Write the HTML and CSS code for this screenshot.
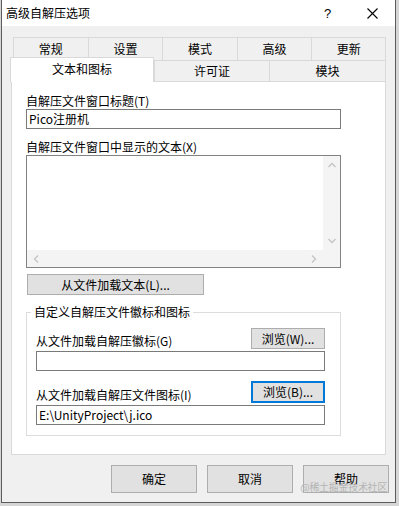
FILE: index.html
```html
<!DOCTYPE html>
<html lang="zh-CN">
<head>
    <meta charset="UTF-8">
    <title>高级自解压选项</title>
    <link rel="stylesheet" href="styles.css">
</head>
<body>
    <div class="window">
        <div class="titlebar">
            <div class="title">高级自解压选项</div>
            <div class="tb-btn">?</div>
            <div class="tb-btn">
                <svg width="11" height="11" viewBox="0 0 11 11"><path d="M0.5 0.5 L10.5 10.5 M10.5 0.5 L0.5 10.5" stroke="#000" stroke-width="1.1" fill="none"/></svg>
            </div>
        </div>

        <div class="content">
            <div class="tabs">
                <div class="tab-row back">
                    <div class="tab">常规</div>
                    <div class="tab">设置</div>
                    <div class="tab">模式</div>
                    <div class="tab">高级</div>
                    <div class="tab">更新</div>
                </div>
                <div class="tab-row front">
                    <div class="tab active">文本和图标</div>
                    <div class="tab">许可证</div>
                    <div class="tab">模块</div>
                </div>
            </div>

            <div class="panel">
                <div class="lbl">自解压文件窗口标题(T)</div>
                <div class="field">Pico注册机</div>

                <div class="lbl gap">自解压文件窗口中显示的文本(X)</div>
                <div class="memo">
                    <div class="memo-text"></div>
                    <div class="vbar">
                        <svg width="8" height="6" viewBox="0 0 8 6"><polyline points="0.5,5 4,1.5 7.5,5" stroke="#c4c4c4" stroke-width="1.3" fill="none"/></svg>
                        <svg width="8" height="6" viewBox="0 0 8 6"><polyline points="0.5,1 4,4.5 7.5,1" stroke="#c4c4c4" stroke-width="1.3" fill="none"/></svg>
                    </div>
                    <div class="hbar">
                        <svg width="6" height="8" viewBox="0 0 6 8"><polyline points="5,0.5 1.5,4 5,7.5" stroke="#c4c4c4" stroke-width="1.3" fill="none"/></svg>
                        <svg width="6" height="8" viewBox="0 0 6 8"><polyline points="1,0.5 4.5,4 1,7.5" stroke="#c4c4c4" stroke-width="1.3" fill="none"/></svg>
                    </div>
                    <div class="corner"></div>
                </div>

                <button class="btn load-btn">从文件加载文本(L)...</button>

                <fieldset class="group">
                    <legend>自定义自解压文件徽标和图标</legend>
                    <div class="browse-row">
                        <span class="lbl">从文件加载自解压徽标(G)</span>
                        <button class="btn browse">浏览(W)...</button>
                    </div>
                    <div class="field small"></div>

                    <div class="browse-row second">
                        <span class="lbl">从文件加载自解压文件图标(I)</span>
                        <button class="btn browse focused">浏览(B)...</button>
                    </div>
                    <div class="field small">E:\UnityProject\j.ico</div>
                </fieldset>
            </div>
        </div>

        <div class="footer">
            <button class="btn dlg">确定</button>
            <button class="btn dlg">取消</button>
            <button class="btn dlg">帮助</button>
            <span class="watermark">@稀土掘金技术社区</span>
        </div>
    </div>
</body>
</html>
```

FILE: styles.css
```css
body {
    margin: 0;
    background-color: #d6d6d6;
    font-family: "Noto Sans CJK SC", "Liberation Sans", sans-serif;
    font-size: 12px;
    color: #000;
}
.window {
    margin-left: 1px;
    width: 395px;
    height: 503px;
    box-sizing: border-box;
    border: 1px solid #5c5c5c;
    border-top: 0;
    background-color: #f0f0f0;
    display: flex;
    flex-direction: column;
}
.titlebar {
    height: 26px;
    background-color: #fff;
    display: flex;
    align-items: center;
}
.title {
    flex: 1;
    padding-left: 4px;
    line-height: 16px;
}
.tb-btn {
    width: 45px;
    height: 26px;
    display: flex;
    align-items: center;
    justify-content: center;
    font-family: "Liberation Sans", sans-serif;
    font-size: 13px;
}
.content {
    padding: 11px 0 0 9px;
}
.tabs {
    width: 375px;
}
.tab-row {
    display: grid;
}
.tab-row.back {
    grid-template-columns: repeat(5, 1fr);
    margin-left: 2px;
    height: 23px;
}
.tab-row.front {
    grid-template-columns: 143px 115px 1fr;
    height: 21px;
}
.tab {
    box-sizing: border-box;
    border-top: 1px solid #d9d9d9;
    border-left: 1px solid #d9d9d9;
    display: flex;
    align-items: center;
    justify-content: center;
    line-height: 16px;
}
.tab:last-child {
    border-right: 1px solid #d9d9d9;
}
.tab.active {
    position: relative;
    z-index: 1;
    margin: -3px 0 -1px -1px;
    background-color: #fff;
    border-right: 1px solid #d9d9d9;
    padding-bottom: 2px;
}
.panel {
    width: 375px;
    height: 374px;
    box-sizing: border-box;
    background-color: #fff;
    border: 1px solid #d9d9d9;
    padding: 11px 0 0 14px;
}
.lbl {
    display: block;
    line-height: 16px;
    white-space: nowrap;
}
.lbl.gap {
    margin-top: 10px;
}
.field {
    width: 315px;
    height: 20px;
    box-sizing: border-box;
    border: 1px solid #7a7a7a;
    background-color: #fff;
    padding-left: 2px;
    line-height: 18px;
    white-space: nowrap;
}
.field.small {
    width: 289px;
    margin-top: 2px;
}
.memo {
    width: 315px;
    height: 113px;
    box-sizing: border-box;
    border: 1px solid #828282;
    display: grid;
    grid-template-columns: 1fr 17px;
    grid-template-rows: 1fr 17px;
}
.vbar {
    background-color: #f4f4f4;
    display: flex;
    flex-direction: column;
    align-items: center;
    justify-content: space-between;
    padding: 6px 0 6px;
}
.hbar {
    background-color: #f4f4f4;
    display: flex;
    align-items: center;
    justify-content: space-between;
    padding: 0 6px;
}
.corner {
    background-color: #f4f4f4;
}
.btn {
    box-sizing: border-box;
    background-color: #e1e1e1;
    border: 1px solid #adadad;
    font-family: inherit;
    font-size: 12px;
    line-height: 16px;
    padding: 0;
    color: #000;
}
.load-btn {
    display: block;
    margin: 6px 0 0 1px;
    width: 177px;
    height: 21px;
}
.group {
    margin: 9px 0 0;
    width: 315px;
    box-sizing: border-box;
    border: 1px solid #dcdcdc;
    padding: 0 15px 10px 9px;
    min-width: 0;
}
.group legend {
    padding: 0 3px;
    margin-left: -5px;
    line-height: 16px;
}
.browse-row {
    display: flex;
    justify-content: space-between;
    align-items: flex-end;
    margin-top: 8px;
}
.browse-row.second {
    margin-top: 10px;
}
.browse {
    width: 74px;
    height: 21px;
}
.browse.focused {
    height: 22px;
    border: 2px solid #0078d7;
}
.footer {
    position: relative;
    display: flex;
    justify-content: flex-end;
    gap: 10px;
    margin-top: 10px;
    padding-right: 6px;
}
.dlg {
    width: 86px;
    height: 28px;
}
.watermark {
    position: absolute;
    right: 8px;
    top: 16px;
    font-size: 10px;
    line-height: 12px;
    color: #b4b4b4;
    letter-spacing: -0.3px;
}
```
